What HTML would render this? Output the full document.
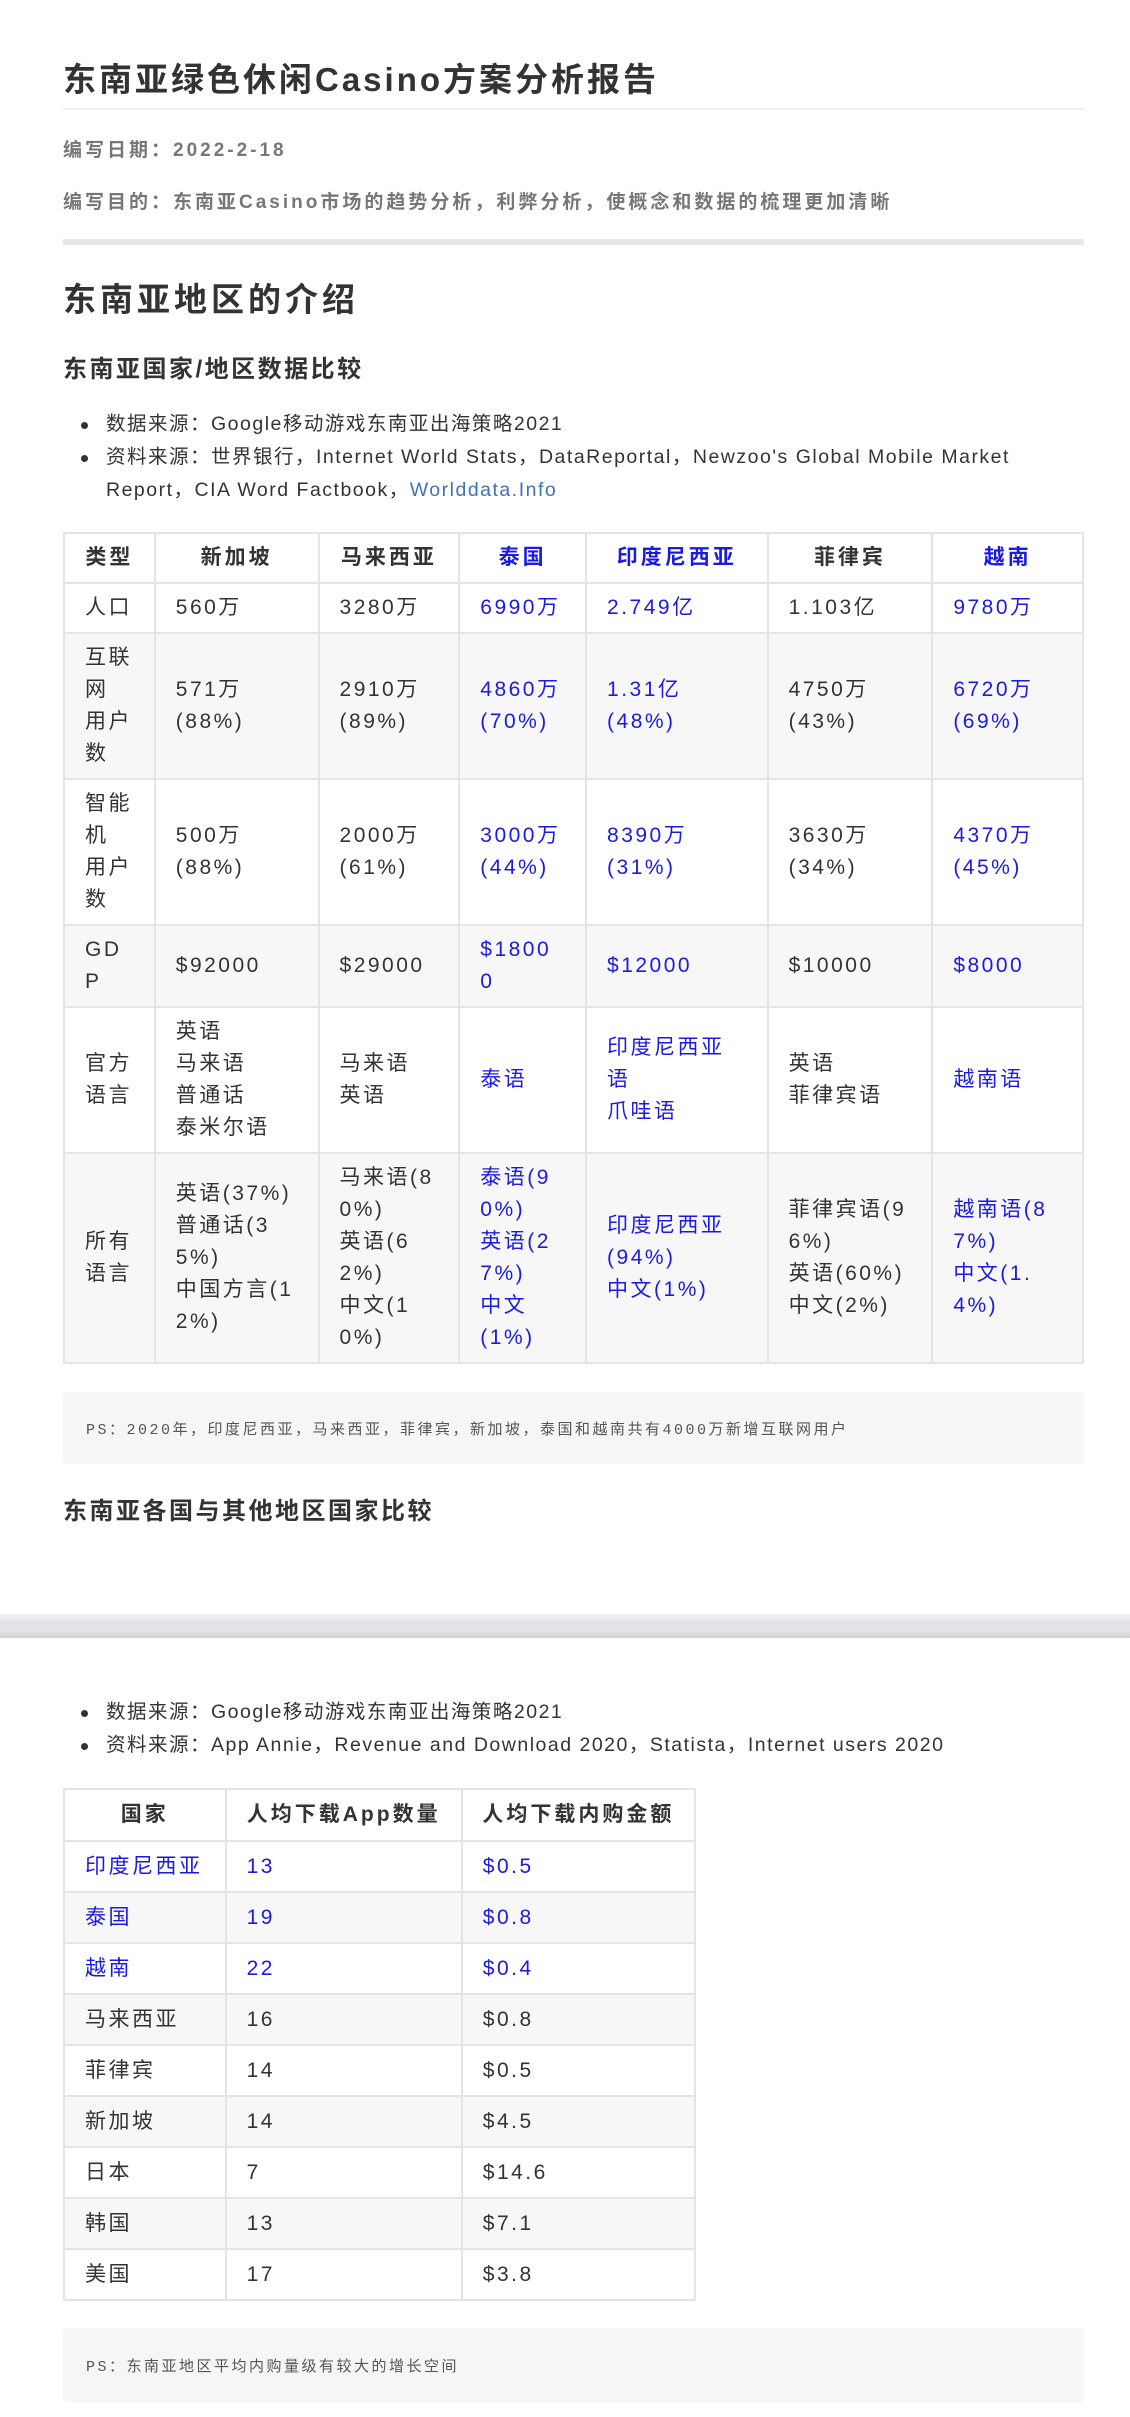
<!DOCTYPE html>
<html><head><meta charset="utf-8">
<style>
*{margin:0;padding:0;box-sizing:border-box}
body{width:1130px;height:2417px;background:#fff;position:relative;font-family:"Liberation Sans","Noto Sans CJK SC",sans-serif;color:#333;overflow:hidden}
.a{position:absolute;left:63px;white-space:nowrap}
h1{font-size:33px;font-weight:bold;line-height:40px;letter-spacing:3px}
.meta{font-size:19px;font-weight:bold;color:#777;line-height:26px;letter-spacing:3px}
.hr1{position:absolute;left:63px;width:1021px;top:108px;height:2px;background:#eee}
.hr2{position:absolute;left:63px;width:1021px;top:239px;height:6px;background:#e7e7e7}
h2{font-size:33px;font-weight:bold;line-height:36px;letter-spacing:4px}
h3{font-size:24px;font-weight:bold;line-height:32px;letter-spacing:2.5px}
ul{font-size:19.5px;line-height:33px;list-style:none;letter-spacing:1.5px}
li{position:relative;padding-left:43px}
li:before{content:"";position:absolute;left:18px;top:14px;width:7px;height:7px;border-radius:50%;background:#333}
a{color:#4271b5;text-decoration:none}
table{position:absolute;left:63px;border-collapse:collapse;font-size:21px;line-height:32px;letter-spacing:2.5px}
td,th{border:2px solid #e4e4e4;padding:8px 0 8px 20px;text-align:left;vertical-align:middle;white-space:nowrap}
.t2 td{padding:9px 0 8px 20px}
th{text-align:center;padding-left:0;font-weight:bold;height:48px;letter-spacing:3px}
tbody tr:nth-child(even){background:#f7f7f7}
.b{color:#1a1ae0}
.ps{position:absolute;left:63px;width:1021px;background:#f6f6f6;border-radius:4px;font-family:"Liberation Mono","Noto Sans CJK SC",monospace;font-size:15px;letter-spacing:2.5px;color:#555;padding-left:23px;display:flex;align-items:center}
.band{position:absolute;left:0;width:1130px;top:1614px;height:24px;background:linear-gradient(#f4f4f6,#e3e3e8 30%,#e3e3e8 70%,#cfcfd4);border-top:1px solid #eee}
</style></head><body>
<h1 class="a" style="top:60px">东南亚绿色休闲Casino方案分析报告</h1>
<div class="hr1"></div>
<div class="a meta" style="top:138px">编写日期：2022-2-18</div>
<div class="a meta" style="top:190px">编写目的：东南亚Casino市场的趋势分析，利弊分析，使概念和数据的梳理更加清晰</div>
<div class="hr2"></div>
<h2 class="a" style="top:282px">东南亚地区的介绍</h2>
<h3 class="a" style="top:354px">东南亚国家/地区数据比较</h3>
<ul class="a" style="top:408px">
<li>数据来源：Google移动游戏东南亚出海策略2021</li>
<li>资料来源：世界银行，Internet World Stats，DataReportal，Newzoo's Global Mobile Market<br>Report，CIA Word Factbook，<a>Worlddata.Info</a></li>
</ul>
<table style="top:532px;width:1021px">
<colgroup><col style="width:91px"><col style="width:164px"><col style="width:141px"><col style="width:127px"><col style="width:182px"><col style="width:165px"><col style="width:151px"></colgroup>
<thead><tr><th>类型</th><th>新加坡</th><th>马来西亚</th><th class="b">泰国</th><th class="b">印度尼西亚</th><th>菲律宾</th><th class="b">越南</th></tr></thead>
<tbody>
<tr><td>人口</td><td>560万</td><td>3280万</td><td class="b">6990万</td><td class="b">2.749亿</td><td>1.103亿</td><td class="b">9780万</td></tr>
<tr><td>互联<br>网<br>用户<br>数</td><td>571万<br>(88%)</td><td>2910万<br>(89%)</td><td class="b">4860万<br>(70%)</td><td class="b">1.31亿<br>(48%)</td><td>4750万<br>(43%)</td><td class="b">6720万<br>(69%)</td></tr>
<tr><td>智能<br>机<br>用户<br>数</td><td>500万<br>(88%)</td><td>2000万<br>(61%)</td><td class="b">3000万<br>(44%)</td><td class="b">8390万<br>(31%)</td><td>3630万<br>(34%)</td><td class="b">4370万<br>(45%)</td></tr>
<tr><td>GD<br>P</td><td>$92000</td><td>$29000</td><td class="b">$1800<br>0</td><td class="b">$12000</td><td>$10000</td><td class="b">$8000</td></tr>
<tr><td>官方<br>语言</td><td>英语<br>马来语<br>普通话<br>泰米尔语</td><td>马来语<br>英语</td><td class="b">泰语</td><td class="b">印度尼西亚<br>语<br>爪哇语</td><td>英语<br>菲律宾语</td><td class="b">越南语</td></tr>
<tr><td>所有<br>语言</td><td>英语(37%)<br>普通话(3<br>5%)<br>中国方言(1<br>2%)</td><td>马来语(8<br>0%)<br>英语(6<br>2%)<br>中文(1<br>0%)</td><td class="b">泰语(9<br>0%)<br>英语(2<br>7%)<br>中文<br>(1%)</td><td class="b">印度尼西亚<br>(94%)<br>中文(1%)</td><td>菲律宾语(9<br>6%)<br>英语(60%)<br>中文(2%)</td><td class="b">越南语(8<br>7%)<br>中文(1.<br>4%)</td></tr>
</tbody></table>
<div class="ps" style="top:1392px;height:72px">PS：2020年，印度尼西亚，马来西亚，菲律宾，新加坡，泰国和越南共有4000万新增互联网用户</div>
<h3 class="a" style="top:1496px">东南亚各国与其他地区国家比较</h3>
<div class="band"></div>
<ul class="a" style="top:1696px">
<li>数据来源：Google移动游戏东南亚出海策略2021</li>
<li>资料来源：App Annie，Revenue and Download 2020，Statista，Internet users 2020</li>
</ul>
<table class="t2" style="top:1788px;width:633px">
<colgroup><col style="width:162px"><col style="width:237px"><col style="width:234px"></colgroup>
<thead><tr><th style="height:52px">国家</th><th>人均下载App数量</th><th>人均下载内购金额</th></tr></thead>
<tbody>
<tr><td class="b">印度尼西亚</td><td class="b">13</td><td class="b">$0.5</td></tr>
<tr><td class="b">泰国</td><td class="b">19</td><td class="b">$0.8</td></tr>
<tr><td class="b">越南</td><td class="b">22</td><td class="b">$0.4</td></tr>
<tr><td>马来西亚</td><td>16</td><td>$0.8</td></tr>
<tr><td>菲律宾</td><td>14</td><td>$0.5</td></tr>
<tr><td>新加坡</td><td>14</td><td>$4.5</td></tr>
<tr><td>日本</td><td>7</td><td>$14.6</td></tr>
<tr><td>韩国</td><td>13</td><td>$7.1</td></tr>
<tr><td>美国</td><td>17</td><td>$3.8</td></tr>
</tbody></table>
<div class="ps" style="top:2328px;height:74px">PS：东南亚地区平均内购量级有较大的增长空间</div>
</body></html>
